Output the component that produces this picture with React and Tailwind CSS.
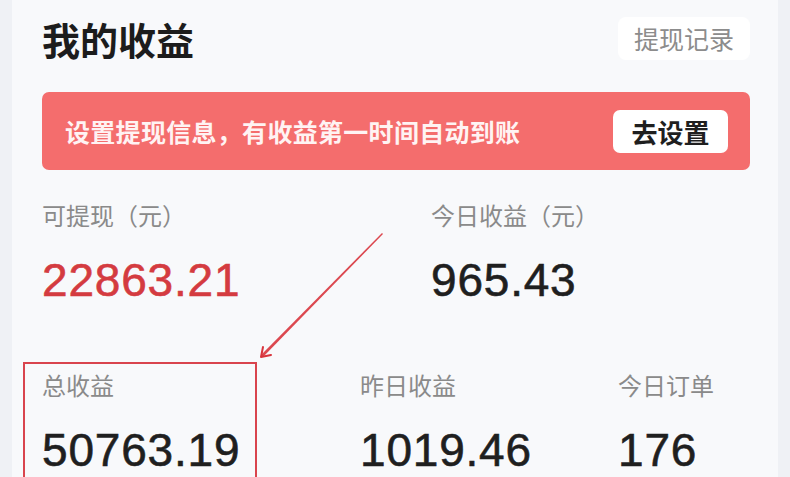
import React from "react";

const cjk = { fontFamily: '"Noto Sans CJK SC", "Noto Sans", sans-serif' };
const num = { fontFamily: '"Liberation Sans", Arial, sans-serif' };

function Stat({ label, value, red, w }) {
  return (
    <div className={`${w} flex flex-col`}>
      <div className="h-[28px] text-[24px] leading-[28px] text-[#8a8a8a]" style={cjk}>
        {label}
      </div>
      <div
        className={`mt-[28px] h-[45px] text-[46px] leading-none tracking-[0.8px] [-webkit-text-stroke:0.6px_currentColor] ${red ? "text-[#d43b40]" : "text-[#1f1f1f]"}`}
        style={num}
      >
        {value}
      </div>
    </div>
  );
}

export default function App() {
  return (
    <div className="relative w-[790px] h-[477px] overflow-hidden bg-[#eff1f5] px-[12px]">
      <div className="h-full bg-[#f8f9fb] pl-[30px] pr-[28px]" style={cjk}>
        <div className="pt-[17px] flex items-center justify-between h-[60px]">
          <div className="text-[38px] font-bold text-[#1c1c1c] leading-none">我的收益</div>
          <div className="w-[132px] h-[43px] rounded-[8px] bg-white flex items-center justify-center text-[25px] text-[#8c8c8c]">
            提现记录
          </div>
        </div>

        <div className="mt-[32px] h-[78px] rounded-[7px] bg-[#f46d6d] flex items-center justify-between pl-[23px] pr-[22px]">
          <div className="text-[25px] tracking-[0.3px] font-bold text-[#fff3f3] leading-none">
            设置提现信息，有收益第一时间自动到账
          </div>
          <div className="w-[115px] h-[43px] rounded-[7px] bg-white flex items-center justify-center text-[26px] font-bold text-[#1f1f1f]">
            去设置
          </div>
        </div>

        <div className="mt-[31px] flex">
          <Stat label="可提现（元）" value="22863.21" red w="w-[389px]" />
          <Stat label="今日收益（元）" value="965.43" w="w-[300px]" />
        </div>

        <div className="mt-[69px] flex">
          <Stat label="总收益" value="50763.19" w="w-[318px]" />
          <Stat label="昨日收益" value="1019.46" w="w-[258px]" />
          <Stat label="今日订单" value="176" w="w-[130px]" />
        </div>
      </div>

      <div className="absolute left-[23px] top-[362px] w-[234px] h-[140px] border-2 border-[#d9444d]" />

      <svg className="absolute left-0 top-0" width="790" height="477" viewBox="0 0 790 477">
        <polygon points="382,233 383,234 263,357 261,355" fill="#d8343c" opacity="0.9" />
        <path d="M261,357 L263,347 M261,357 L271,355" stroke="#d8343c" strokeWidth="2" fill="none" strokeLinecap="round" />
      </svg>
    </div>
  );
}
